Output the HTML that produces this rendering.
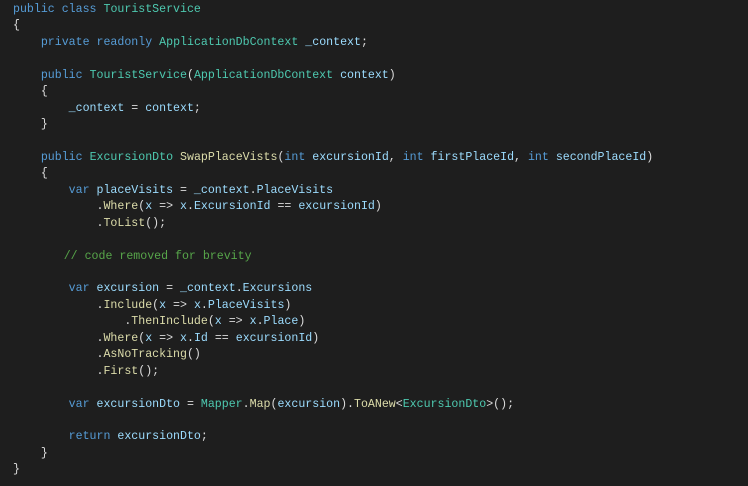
<!DOCTYPE html>
<html><head><meta charset="utf-8"><style>
html,body{margin:0;padding:0;background:#1e1e1e;width:748px;height:486px;overflow:hidden}
pre{margin:0;position:absolute;left:13px;top:2px;font-family:"Liberation Mono",monospace;font-size:11.6px;line-height:16.44px;color:#dcdcdc}
.k{color:#569cd6}.t{color:#4ec9b0}.m{color:#dcdcaa}.v{color:#9cdcfe}.c{color:#57a64a}
.cm{position:relative;left:2px}
</style></head><body><pre><span class="k">public</span> <span class="k">class</span> <span class="t">TouristService</span>
{
    <span class="k">private</span> <span class="k">readonly</span> <span class="t">ApplicationDbContext</span> <span class="v">_context</span>;

    <span class="k">public</span> <span class="t">TouristService</span>(<span class="t">ApplicationDbContext</span> <span class="v">context</span>)
    {
        <span class="v">_context</span> = <span class="v">context</span>;
    }

    <span class="k">public</span> <span class="t">ExcursionDto</span> <span class="m">SwapPlaceVists</span>(<span class="k">int</span> <span class="v">excursionId</span>, <span class="k">int</span> <span class="v">firstPlaceId</span>, <span class="k">int</span> <span class="v">secondPlaceId</span>)
    {
        <span class="k">var</span> <span class="v">placeVisits</span> = <span class="v">_context</span>.<span class="v">PlaceVisits</span>
            .<span class="m">Where</span>(<span class="v">x</span> =&gt; <span class="v">x</span>.<span class="v">ExcursionId</span> == <span class="v">excursionId</span>)
            .<span class="m">ToList</span>();

       <span class="c cm">// code removed for brevity</span>

        <span class="k">var</span> <span class="v">excursion</span> = <span class="v">_context</span>.<span class="v">Excursions</span>
            .<span class="m">Include</span>(<span class="v">x</span> =&gt; <span class="v">x</span>.<span class="v">PlaceVisits</span>)
                .<span class="m">ThenInclude</span>(<span class="v">x</span> =&gt; <span class="v">x</span>.<span class="v">Place</span>)
            .<span class="m">Where</span>(<span class="v">x</span> =&gt; <span class="v">x</span>.<span class="v">Id</span> == <span class="v">excursionId</span>)
            .<span class="m">AsNoTracking</span>()
            .<span class="m">First</span>();

        <span class="k">var</span> <span class="v">excursionDto</span> = <span class="t">Mapper</span>.<span class="m">Map</span>(<span class="v">excursion</span>).<span class="m">ToANew</span>&lt;<span class="t">ExcursionDto</span>&gt;();

        <span class="k">return</span> <span class="v">excursionDto</span>;
    }
}</pre></body></html>
